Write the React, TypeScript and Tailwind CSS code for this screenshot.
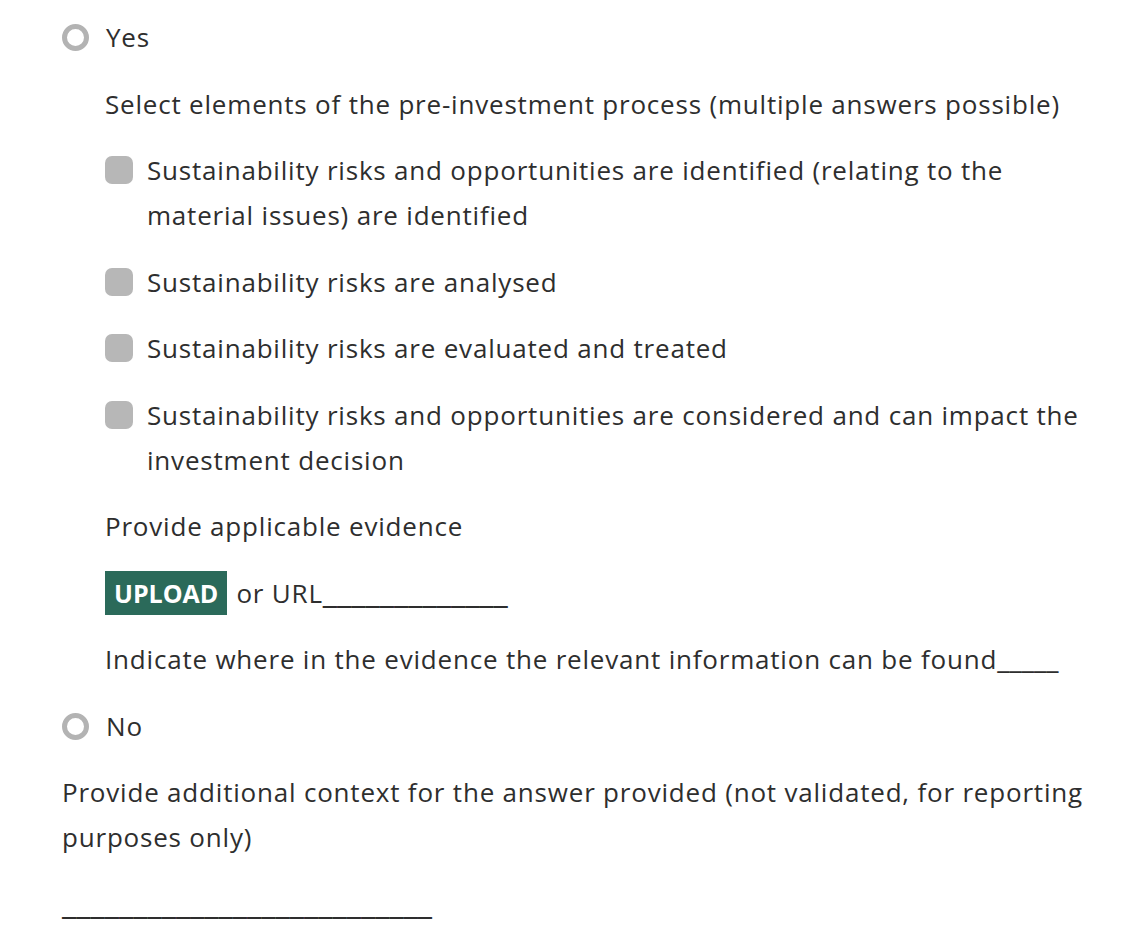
import { ReactNode } from 'react'

const Radio = ({ label }: { label: string }) => (
    <div className="flex items-center">
        <span className="ml-[62px] size-[27px] shrink-0 rounded-full border-[5px] border-[#b3b3b3]" />
        <span className="ml-[17px]">{label}</span>
    </div>
)

const Check = ({ children }: { children: ReactNode }) => (
    <div className="flex items-start">
        <span className="mt-[8px] size-[28px] shrink-0 rounded-[7px] bg-[#b7b7b7]" />
        <span className="ml-[14px]">{children}</span>
    </div>
)

// blank fill-in line, drawn with underscores
const Blank = ({ n }: { n: number }) => (
    <span className="text-[32.5px] leading-[0px] tracking-[0px]">{'_'.repeat(n)}</span>
)

const items = [
    'Sustainability risks and opportunities are identified (relating to the material issues) are identified',
    'Sustainability risks are analysed',
    'Sustainability risks are evaluated and treated',
    'Sustainability risks and opportunities are considered and can impact the investment decision',
]

export default function App() {
    return (
        <div
            className="min-h-[948px] bg-white pt-[15px] text-[26px] leading-[45px] tracking-[0.8px] text-[#2e2e2e]"
            style={{ fontFamily: '"Open Sans", sans-serif' }}
        >
            <div className="flex flex-col gap-[21.5px]">
                <Radio label="Yes" />
                <div className="flex flex-col gap-[21.5px] pl-[105px] pr-[30px]">
                    <p>Select elements of the pre-investment process (multiple answers possible)</p>
                    {items.map(item => (
                        <Check key={item}>{item}</Check>
                    ))}
                    <p>Provide applicable evidence</p>
                    <div className="flex h-[45px] items-center">
                        <span className="bg-[#2b6a5a] px-[9px] text-[25px] leading-[44px] font-bold tracking-[0px] text-white">
                            UPLOAD
                        </span>
                        <span className="ml-[9px]">
                            or URL<Blank n={13} />
                        </span>
                    </div>
                    <p>
                        Indicate where in the evidence the relevant information can be found
                        <span className="text-[28px] leading-[0px] tracking-[0px]">_____</span>
                    </p>
                </div>
                <Radio label="No" />
                <p className="pl-[62px] pr-[30px]">
                    Provide additional context for the answer provided (not validated, for reporting purposes only)
                </p>
                <p className="pl-[62px]">
                    <Blank n={26} />
                </p>
            </div>
        </div>
    )
}
